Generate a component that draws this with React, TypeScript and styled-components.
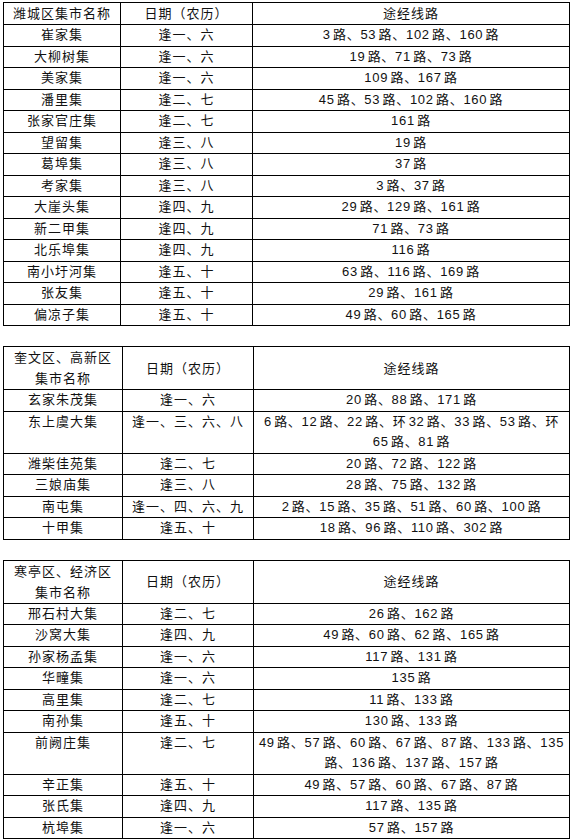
import { Fragment } from 'react';

import styled, { createGlobalStyle } from 'styled-components';

type MarketRow = {
  name: string;
  days: string;
  routes: string[];
};

type MarketTable = {
  title: string[];
  firstCol: number;
  secondCol: number;
  rows: MarketRow[];
};

const TABLES: MarketTable[] = [
  {
    title: ['潍城区集市名称'],
    firstCol: 117,
    secondCol: 132,
    rows: [
      { name: '崔家集', days: '逢一、六', routes: ['3 路、53 路、102 路、160 路'] },
      { name: '大柳树集', days: '逢一、六', routes: ['19 路、71 路、73 路'] },
      { name: '美家集', days: '逢一、六', routes: ['109 路、167 路'] },
      { name: '潘里集', days: '逢二、七', routes: ['45 路、53 路、102 路、160 路'] },
      { name: '张家官庄集', days: '逢二、七', routes: ['161 路'] },
      { name: '望留集', days: '逢三、八', routes: ['19 路'] },
      { name: '葛埠集', days: '逢三、八', routes: ['37 路'] },
      { name: '考家集', days: '逢三、八', routes: ['3 路、37 路'] },
      { name: '大崖头集', days: '逢四、九', routes: ['29 路、129 路、161 路'] },
      { name: '新二甲集', days: '逢四、九', routes: ['71 路、73 路'] },
      { name: '北乐埠集', days: '逢四、九', routes: ['116 路'] },
      { name: '南小圩河集', days: '逢五、十', routes: ['63 路、116 路、169 路'] },
      { name: '张友集', days: '逢五、十', routes: ['29 路、161 路'] },
      { name: '偏凉子集', days: '逢五、十', routes: ['49 路、60 路、165 路'] },
    ],
  },
  {
    title: ['奎文区、高新区', '集市名称'],
    firstCol: 119,
    secondCol: 131,
    rows: [
      { name: '玄家朱茂集', days: '逢一、六', routes: ['20 路、88 路、171 路'] },
      {
        name: '东上虞大集',
        days: '逢一、三、六、八',
        routes: ['6 路、12 路、22 路、环 32 路、33 路、53 路、环', '65 路、81 路'],
      },
      { name: '潍柴佳苑集', days: '逢二、七', routes: ['20 路、72 路、122 路'] },
      { name: '三娘庙集', days: '逢三、八', routes: ['28 路、75 路、132 路'] },
      { name: '南屯集', days: '逢一、四、六、九', routes: ['2 路、15 路、35 路、51 路、60 路、100 路'] },
      { name: '十甲集', days: '逢五、十', routes: ['18 路、96 路、110 路、302 路'] },
    ],
  },
  {
    title: ['寒亭区、经济区', '集市名称'],
    firstCol: 119,
    secondCol: 131,
    rows: [
      { name: '邢石村大集', days: '逢二、七', routes: ['26 路、162 路'] },
      { name: '沙窝大集', days: '逢四、九', routes: ['49 路、60 路、62 路、165 路'] },
      { name: '孙家杨孟集', days: '逢一、六', routes: ['117 路、131 路'] },
      { name: '华疃集', days: '逢一、六', routes: ['135 路'] },
      { name: '高里集', days: '逢二、七', routes: ['11 路、133 路'] },
      { name: '南孙集', days: '逢五、十', routes: ['130 路、133 路'] },
      {
        name: '前阙庄集',
        days: '逢二、七',
        routes: ['49 路、57 路、60 路、67 路、87 路、133 路、135', '路、136 路、137 路、157 路'],
      },
      { name: '辛正集', days: '逢五、十', routes: ['49 路、57 路、60 路、67 路、87 路'] },
      { name: '张氏集', days: '逢四、九', routes: ['117 路、135 路'] },
      { name: '杭埠集', days: '逢一、六', routes: ['57 路、157 路'] },
    ],
  },
];

const GlobalStyle = createGlobalStyle`
  html, body {
    margin: 0;
    padding: 0;
    background: #ffffff;
  }
  body {
    font-family: "Liberation Sans", "Noto Sans CJK SC", sans-serif;
    color: #111111;
  }
`;

const App = () => {
  return (
    <>
      <GlobalStyle />
      <S.Page>
        {TABLES.map((table) => (
          <S.Table key={table.title.join('')}>
            <colgroup>
              <col style={{ width: table.firstCol }} />
              <col style={{ width: table.secondCol }} />
              <col />
            </colgroup>
            <thead>
              <S.HeadRow $tall={table.title.length > 1}>
                <S.HeadCell>
                  {table.title.map((line, i) => (
                    <Fragment key={line}>
                      {i > 0 && <br />}
                      {line}
                    </Fragment>
                  ))}
                </S.HeadCell>
                <S.HeadCell>日期（农历）</S.HeadCell>
                <S.HeadCell>途经线路</S.HeadCell>
              </S.HeadRow>
            </thead>
            <tbody>
              {table.rows.map((row) => (
                <S.Row key={row.name}>
                  <S.Cell>{row.name}</S.Cell>
                  <S.Cell>{row.days}</S.Cell>
                  <S.Cell $tight>
                    {row.routes.map((line, i) => (
                      <Fragment key={line}>
                        {i > 0 && <br />}
                        {line}
                      </Fragment>
                    ))}
                  </S.Cell>
                </S.Row>
              ))}
            </tbody>
          </S.Table>
        ))}
      </S.Page>
    </>
  );
};

const S = {
  Page: styled.div`
    display: flex;
    flex-flow: column;
    gap: 20px;
    padding: 2px 0 0 3px;
    width: 567px;
  `,

  Table: styled.table`
    width: 567px;
    border-collapse: collapse;
    table-layout: fixed;
    font-size: 13px;
    letter-spacing: 1px;
    word-spacing: -2px;
  `,

  HeadRow: styled.tr<{ $tall: boolean }>`
    height: ${({ $tall }) => ($tall ? '43px' : '21.5px')};
  `,

  Row: styled.tr`
    height: 21.5px;
  `,

  HeadCell: styled.th`
    border: 1px solid #000000;
    padding: 0;
    font-weight: normal;
    line-height: 21px;
    text-align: center;
    vertical-align: middle;
  `,

  Cell: styled.td<{ $tight?: boolean }>`
    border: 1px solid #000000;
    padding: 0;
    line-height: 20.5px;
    letter-spacing: ${({ $tight }) => ($tight ? '0.7px' : '1px')};
    text-align: center;
    vertical-align: top;
    white-space: nowrap;
  `,
};

export default App;
